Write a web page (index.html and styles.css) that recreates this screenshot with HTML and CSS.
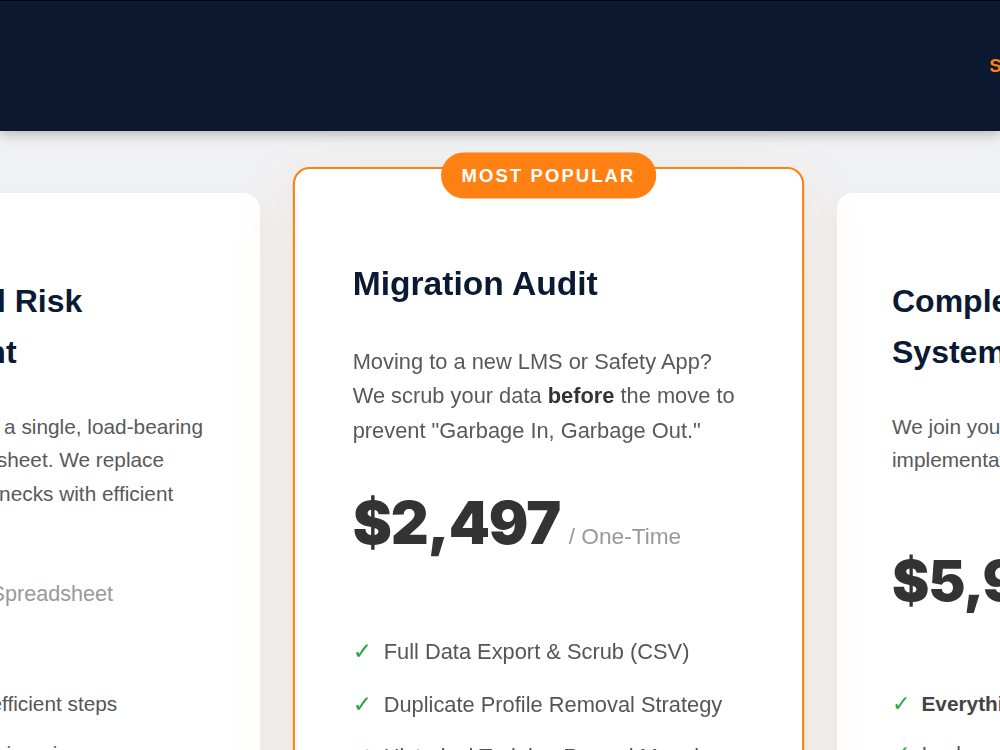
FILE: index.html
```html
<!doctype html>
<html>

	<head>

		<meta name="viewport" content="width=device-width, initial-scale=1.0">
		<title>Pricing - Data Migration Services</title>

		<link rel="stylesheet" href="styles.css">

	</head>

	<body>

		<header class="siteHeader">
			<div class="headerInner">
				<a class="logo" href="#">ClearRecord</a>
				<nav class="mainNav">
					<a class="active" href="#">Services</a>
					<a href="#">Pricing</a>
					<a href="#">About</a>
					<a href="#">Contact</a>
				</nav>
			</div>
		</header>

		<main class="pricing">

			<div class="plans">

				<div class="plan">
					<h3>Operational Risk Assessment</h3>
					<p class="desc">Your team lives on a single, load-bearing scheduling spreadsheet. We replace manual data bottlenecks with efficient</p>
					<p class="price">$497<span>/ Spreadsheet</span></p>
					<ul class="features">
						<li><span class="check">&#10003;</span>Cut steps into efficient steps</li>
						<li><span class="check">&#10003;</span>Process Re-engineering</li>
					</ul>
				</div>

				<div class="plan featured">
					<span class="badge">Most Popular</span>
					<h3>Migration Audit</h3>
					<p class="desc">Moving to a new LMS or Safety App? We scrub your data <b>before</b> the move to prevent "Garbage In, Garbage Out."</p>
					<p class="price">$2,497<span>/ One-Time</span></p>
					<ul class="features">
						<li><span class="check">&#10003;</span>Full Data Export &amp; Scrub (CSV)</li>
						<li><span class="check">&#10003;</span>Duplicate Profile Removal Strategy</li>
						<li><span class="check">&#10003;</span>Historical Training Record Mapping</li>
					</ul>
				</div>

				<div class="plan">
					<h3>Complete Compliance System Rebuild</h3>
					<p class="desc">We join your vendor calls and own the implementation from kickoff to launch.</p>
					<p class="price">$5,997<span>/ Project</span></p>
					<ul class="features">
						<li><span class="check">&#10003;</span><b>Everything in Migration Audit</b></li>
						<li><span class="check">&#10003;</span>Implementation Support</li>
					</ul>
				</div>

			</div>

		</main>

	</body>

</html>
```

FILE: styles.css
```css
html, body {
	margin: 0; padding: 0;
	overflow: hidden;
	font-family: "Liberation Sans", Arial, sans-serif;
	background-color: #f0f1f3;
}

.siteHeader {
	position: relative;
	z-index: 2;
	height: 130px;
	border-top: 1px solid #03060c;
	background-color: #0b1830;
	box-shadow: 0 3px 12px rgba(0, 0, 0, 0.25);
}

.headerInner {
	display: flex;
	align-items: center;
	height: 100%;
	width: 1551px;
	margin-left: -227px;
}

.logo {
	color: white;
	font-size: 24px;
	font-weight: 700;
	text-decoration: none;
}

.mainNav {
	display: flex;
	gap: 25px;
	margin-left: auto;
}

.mainNav a {
	color: white;
	font-size: 18.4px;
	font-weight: 700;
	text-decoration: none;
}

.mainNav a.active {
	color: #ff8114;
}

.pricing {
	padding: 62px 0 80px;
}

.plans {
	display: grid;
	grid-template-columns: repeat(3, 487px);
	gap: 45px;
	align-items: start;
	margin-left: -227px;
}

.plan {
	position: relative;
	padding: 81px 53px 53px;
	border: 2px solid transparent;
	border-radius: 16px;
	background-color: white;
	box-shadow: 0 10px 30px rgba(0, 0, 0, 0.04);
}

.plan.featured {
	z-index: 1;
	padding-left: 55px;
	padding-right: 51px;
	border-color: #ff8114;
	transform: scale(1.05);
	transform-origin: 50% 520px;
	box-shadow: 0 20px 60px rgba(255, 129, 20, 0.12);
}

.badge {
	position: absolute;
	top: -16px;
	left: 50%;
	transform: translateX(-50%);
	padding: 12px 20px;
	border-radius: 30px;
	background-color: #ff8114;
	color: white;
	font-size: 17.6px;
	font-weight: 700;
	line-height: 20px;
	letter-spacing: 2px;
	text-transform: uppercase;
	white-space: nowrap;
}

.plan h3 {
	margin: 0 0 31.6px;
	color: #0b1a33;
	font-size: 32px;
	line-height: 1.6;
}

.featured h3 {
	margin-top: 3px;
	margin-bottom: 30.6px;
}

.desc {
	min-height: 99.84px;
	margin: 0 0 38px;
	color: #595959;
	font-size: 20.8px;
	line-height: 1.6;
}

.desc b {
	color: #333;
}

.price {
	margin: 0 0 64px;
	color: #333;
	font-family: "Inter", sans-serif;
	font-size: 56px;
	font-weight: 900;
	line-height: 1.2;
	letter-spacing: -1px;
}

.price span {
	margin-left: 8px;
	color: #999;
	font-family: "Liberation Sans", Arial, sans-serif;
	font-size: 21.6px;
	font-weight: 400;
	letter-spacing: 0;
}

.features {
	list-style: none;
	margin: 0;
	padding: 0;
}

.features li {
	display: flex;
	padding: 8.3px 0;
	color: #555;
	font-size: 20.8px;
	line-height: 33.28px;
}

.features b {
	color: #444;
}

.check {
	flex-shrink: 0;
	width: 29.5px;
	color: #28a745;
	font-family: "DejaVu Sans", sans-serif;
	font-size: 22px;
}
```
